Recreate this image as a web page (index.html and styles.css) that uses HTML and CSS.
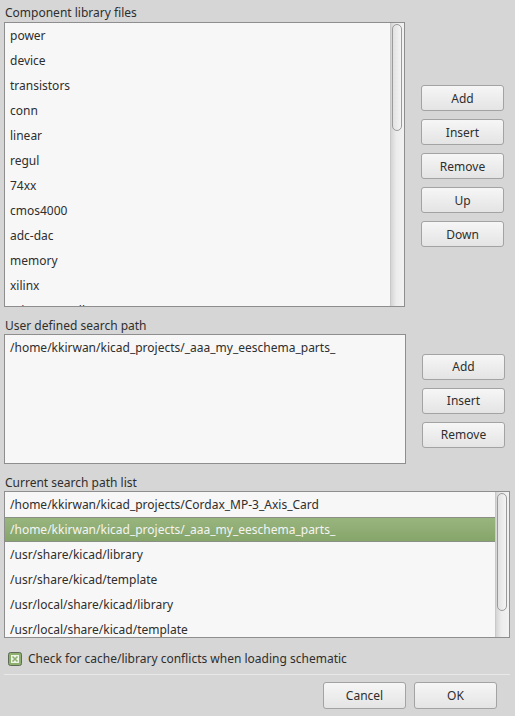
FILE: index.html
```html
<!DOCTYPE html>
<html lang="en">
<head>
    <meta charset="UTF-8">
    <title>Library Options</title>
    <link rel="stylesheet" href="styles.css">
</head>
<body>
    <div class="dialog">
        <div class="caption first">Component library files</div>
        <div class="group">
            <div class="listbox libs">
                <div class="items">
                    <div class="item">power</div>
                    <div class="item">device</div>
                    <div class="item">transistors</div>
                    <div class="item">conn</div>
                    <div class="item">linear</div>
                    <div class="item">regul</div>
                    <div class="item">74xx</div>
                    <div class="item">cmos4000</div>
                    <div class="item">adc-dac</div>
                    <div class="item">memory</div>
                    <div class="item">xilinx</div>
                    <div class="item">microcontrollers</div>
                </div>
                <div class="scrollbar">
                    <div class="thumb libs-thumb"></div>
                </div>
            </div>
            <div class="buttons">
                <button>Add</button>
                <button>Insert</button>
                <button>Remove</button>
                <button>Up</button>
                <button>Down</button>
            </div>
        </div>

        <div class="caption">User defined search path</div>
        <div class="group">
            <div class="listbox user">
                <div class="items">
                    <div class="item">/home/kkirwan/kicad_projects/_aaa_my_eeschema_parts_</div>
                </div>
            </div>
            <div class="buttons">
                <button>Add</button>
                <button>Insert</button>
                <button>Remove</button>
            </div>
        </div>

        <div class="caption">Current search path list</div>
        <div class="listbox paths">
            <div class="items">
                <div class="item">/home/kkirwan/kicad_projects/Cordax_MP-3_Axis_Card</div>
                <div class="item selected">/home/kkirwan/kicad_projects/_aaa_my_eeschema_parts_</div>
                <div class="item">/usr/share/kicad/library</div>
                <div class="item">/usr/share/kicad/template</div>
                <div class="item">/usr/local/share/kicad/library</div>
                <div class="item">/usr/local/share/kicad/template</div>
            </div>
            <div class="scrollbar">
                <div class="thumb paths-thumb"></div>
            </div>
        </div>

        <label class="check">
            <svg width="14" height="14" viewBox="0 0 14 14">
                <rect x="0.5" y="0.5" width="13" height="13" rx="2" fill="#8db06f" stroke="#5f6a58"/>
                <rect x="3" y="3" width="8" height="8" fill="#eef4e8"/>
                <path d="M4.5 4.5 L9.5 9.5 M9.5 4.5 L4.5 9.5" stroke="#8db06f" stroke-width="1.6"/>
            </svg>
            Check for cache/library conflicts when loading schematic
        </label>

        <div class="separator"></div>

        <div class="footer">
            <button class="wide">Cancel</button>
            <button class="wide">OK</button>
        </div>
    </div>
</body>
</html>
```

FILE: styles.css
```css
body {
    margin: 0;
    background: #d6d6d6;
    font-family: "Noto Sans", "Open Sans", sans-serif;
    font-size: 12px;
    color: #2e2e2e;
}

.dialog {
    width: 515px;
    height: 716px;
    padding: 0 0 0 4px;
    box-sizing: border-box;
}

.caption {
    margin-top: 10px;
    padding-left: 1px;
    height: 17px;
    line-height: 17px;
}

.caption.first {
    margin-top: 4px;
    height: 18px;
}

.group {
    display: flex;
    align-items: center;
}

.listbox {
    display: flex;
    background: #f7f7f7;
    border: 1px solid #8e8e8e;
    overflow: hidden;
    box-sizing: border-box;
}

.listbox.libs {
    width: 401px;
    height: 285px;
}

.listbox.user {
    width: 402px;
    height: 130px;
}

.listbox.paths {
    width: 506px;
    height: 147px;
}

.items {
    flex: 1;
    overflow: hidden;
}

.item {
    height: 25px;
    line-height: 25px;
    padding-left: 5px;
    white-space: nowrap;
}

.item.selected {
    line-height: 23px;
    box-sizing: border-box;
    color: #f4f4f4;
    background: linear-gradient(#98b57e, #86a56a);
    border-top: 1px solid #8a9184;
    border-bottom: 1px solid #8a9184;
}

.scrollbar {
    width: 14px;
    border-left: 1px solid #c9c9c9;
    background: linear-gradient(to right, #d4d4d4, #ececec 40%, #f2f2f2);
    box-sizing: border-box;
    padding: 1px 1px 0 1px;
}

.thumb {
    width: 10px;
    border: 1px solid #9a9a9a;
    border-radius: 5px;
    background: linear-gradient(to right, #e2e2e2, #f4f4f4);
    box-sizing: border-box;
}

.libs-thumb {
    height: 107px;
}

.paths-thumb {
    height: 118px;
}

.buttons {
    display: flex;
    flex-direction: column;
    gap: 8px;
    margin-left: 16px;
    padding-top: 3px;
}

button {
    width: 83px;
    height: 26px;
    padding: 0;
    font-family: inherit;
    font-size: 12px;
    color: #2e2e2e;
    background: linear-gradient(#f6f6f6, #e4e4e4);
    border: 1px solid #a3a3a3;
    border-radius: 3px;
}

.check {
    display: flex;
    align-items: center;
    gap: 6px;
    height: 23px;
    margin-top: 9px;
    padding-left: 4px;
}

.separator {
    width: 506px;
    margin-top: 4px;
    border-top: 1px solid #e8e8e8;
}

.footer {
    display: flex;
    justify-content: flex-end;
    gap: 8px;
    margin-top: 7px;
    padding-right: 18px;
}

button.wide {
    width: 83px;
    height: 27px;
}
```
